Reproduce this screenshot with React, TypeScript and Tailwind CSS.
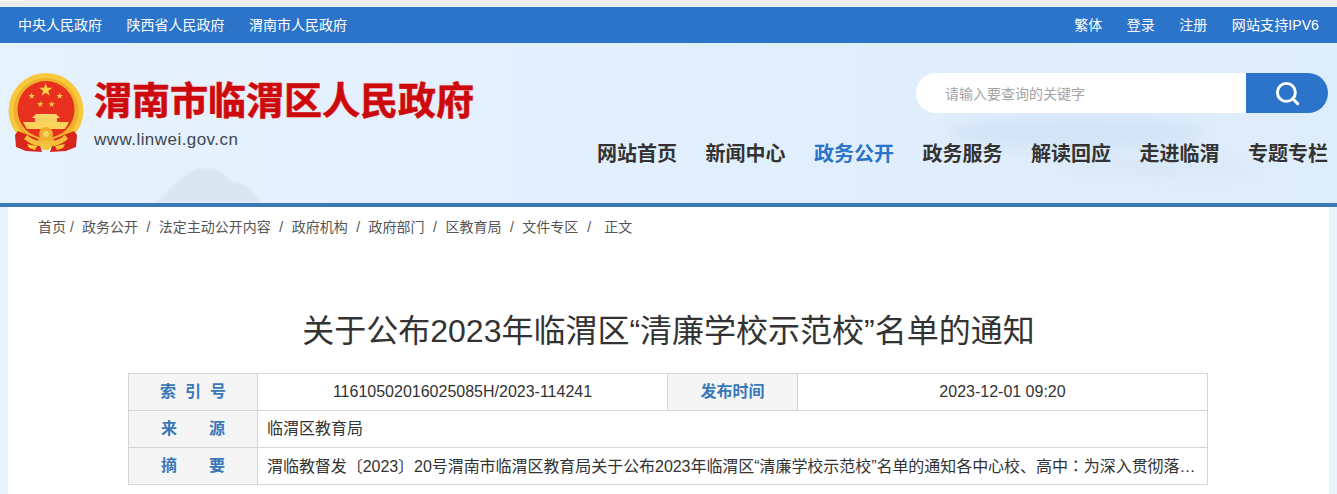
import { Search } from "lucide-react"

const font = "font-['Liberation_Sans','Noto_Sans_CJK_SC',sans-serif]"

const nav = ["网站首页", "新闻中心", "政务公开", "政务服务", "解读回应", "走进临渭", "专题专栏"]
const crumbs = ["政务公开", "法定主动公开内容", "政府机构", "政府部门", "区教育局"]

const star = (cx: number, cy: number, r: number) => {
  const pts: string[] = []
  for (let i = 0; i < 10; i++) {
    const a = (Math.PI / 5) * i - Math.PI / 2
    const d = i % 2 === 0 ? r : r * 0.38
    pts.push(`${(cx + d * Math.cos(a)).toFixed(2)},${(cy + d * Math.sin(a)).toFixed(2)}`)
  }
  return pts.join(" ")
}

const Emblem = () => (
  <svg width="76" height="80" viewBox="0 0 76 80" className="shrink-0">
    <circle cx="38" cy="37.5" r="37.5" fill="#f8c83f" />
    <circle cx="38" cy="37.5" r="32.5" fill="#efb02c" />
    <circle cx="38" cy="36.5" r="28.5" fill="#e8301f" />
    <polygon points={star(37.7, 17, 7)} fill="#fbd24a" />
    <polygon points={star(23.7, 23, 3.4)} fill="#fbd24a" />
    <polygon points={star(51.7, 23, 3.4)} fill="#fbd24a" />
    <polygon points={star(32.3, 31.3, 3.4)} fill="#fbd24a" />
    <polygon points={star(43.7, 31.3, 3.4)} fill="#fbd24a" />
    {/* gate */}
    <path d="M28 41 L48 41 L52 45 L24 45 Z" fill="#f8d467" />
    <path d="M27 45 H49 V49 H27 Z" fill="#f6cf62" />
    <path d="M15 49 H61 L57 56 H19 Z" fill="#f9d35a" />
    {/* ribbons */}
    <path d="M10 58 L7 62 L8 74 L18 78 L34 79 L30 66 Z" fill="#d8261c" />
    <path d="M66 58 L69 62 L68 74 L58 78 L42 79 L46 66 Z" fill="#d8261c" />
    <path d="M19 62 Q28 70 38 67 Q48 70 57 62 L60 66 Q48 76 38 72 Q28 76 16 66 Z" fill="#f4bd3a" />
    <circle cx="38" cy="61" r="7" fill="#eeb02e" />
    <circle cx="38" cy="61" r="3" fill="#f8d467" />
    <path d="M33 71 H43 L41 77 H35 Z" fill="#f7c53c" />
    <path d="M19 71 L29 73 L27 77 L21 75 Z M57 71 L47 73 L49 77 L55 75 Z" fill="#f7c53c" />
  </svg>
)

export default function App() {
  return (
    <div className={`h-[494px] overflow-hidden bg-[#e9f3fe] ${font}`}>
      <div className="h-[7px] bg-[#ececec]">
        <div className="h-px w-[25px] bg-white" />
      </div>

      {/* top links */}
      <div className="flex h-9 items-center justify-between bg-[#2b74c9] pl-[18px] pr-[18px] text-sm text-white">
        <div className="flex gap-[24.5px]">
          <a>中央人民政府</a>
          <a>陕西省人民政府</a>
          <a>渭南市人民政府</a>
        </div>
        <div className="flex gap-[24.5px]">
          <a>繁体</a>
          <a>登录</a>
          <a>注册</a>
          <a className="tracking-[0.1px]">网站支持IPV6</a>
        </div>
      </div>

      {/* header */}
      <div className="relative flex h-[164px] justify-between overflow-hidden border-b-4 border-[#3a78b8] bg-gradient-to-r from-[#e6f2fe] via-[#e2effd] to-[#deedfc] pl-2 pr-[9px] pt-[30px]">
        <svg className="absolute bottom-0 left-[150px] blur-[1px]" width="120" height="40" viewBox="0 0 120 40">
          <path d="M5 40 C14 34 24 20 34 13 C42 5 58 3 68 8 C76 12 78 18 84 20 C92 18 98 24 104 30 L110 40 Z" fill="#d9e7f3" />
        </svg>
        <svg className="absolute right-[60px] top-[60px] blur-[8px]" width="420" height="90" viewBox="0 0 420 90">
          <ellipse cx="220" cy="30" rx="130" ry="16" fill="#d2e3f5" />
          <ellipse cx="300" cy="65" rx="100" ry="10" fill="#d8e7f7" />
        </svg>
        <div className="relative flex">
          <Emblem />
          <div className="ml-[10px]">
            <h1 className="mt-[2px] text-[38px] font-bold leading-[52px] text-[#cc0a0e] [-webkit-text-stroke:0.6px_#cc0a0e] [text-shadow:0_0_3px_#ffd6d6]">渭南市临渭区人民政府</h1>
            <p className="mt-[1px] text-[17px] leading-6 tracking-[0.45px] text-[#3d4650]">www.linwei.gov.cn</p>
          </div>
        </div>
        <div className="relative flex flex-col items-end">
          <div className="flex h-10 w-[412px] overflow-hidden rounded-full bg-white">
            <div className="flex flex-1 items-center pl-[29px] pt-[2px] text-sm text-[#a5a5a5]">请输入要查询的关键字</div>
            <button className="flex w-[82px] items-center justify-center bg-[#2b74c9] text-white">
              <Search size={27} strokeWidth={2.6} />
            </button>
          </div>
          <nav className="mt-[26px] flex gap-[28.5px] text-xl font-bold leading-[30px] text-[#333333]">
            {nav.map((n) => (
              <a key={n} className={n === "政务公开" ? "text-[#2b74c9]" : ""}>
                {n}
              </a>
            ))}
          </nav>
        </div>
      </div>

      {/* article */}
      <div className="mx-2 h-[287px] bg-white">
        <div className="flex pl-[30px] pt-3 text-sm leading-4 text-[#555555]">
          <span>首页</span>
          <span className="ml-[4px] mr-[8px]">/</span>
          {crumbs.map((c) => (
            <span key={c} className="flex">
              <span>{c}</span>
              <span className="mx-[8.5px]">/</span>
            </span>
          ))}
          <span>文件专区</span>
          <span className="ml-[9px] mr-[13px]">/</span>
          <span>正文</span>
        </div>

        <h2 className="mt-[71px] text-center text-[32px] leading-[50px] text-[#333333]">关于公布2023年临渭区“清廉学校示范校”名单的通知</h2>

        <table className="ml-[120px] mt-[17px] w-[1080px] table-fixed border-collapse text-base text-[#333333]">
          <colgroup>
            <col className="w-[129px]" />
            <col className="w-[410px]" />
            <col className="w-[130px]" />
            <col />
          </colgroup>
          <tbody>
            <tr className="h-[37px]">
              <th className="border border-[#d5d5d5] bg-[#f5f5f5] pl-[9px] tracking-[9px] text-[#3a78b8]">索引号</th>
              <td className="border border-[#d5d5d5] text-center">11610502016025085H/2023-114241</td>
              <th className="border border-[#d5d5d5] bg-[#f5f5f5] text-[#3a78b8]">发布时间</th>
              <td className="border border-[#d5d5d5] text-center">2023-12-01 09:20</td>
            </tr>
            <tr className="h-[37px]">
              <th className="border border-[#d5d5d5] bg-[#f5f5f5] text-[#3a78b8]">来　　源</th>
              <td colSpan={3} className="border border-[#d5d5d5] px-[9px]">临渭区教育局</td>
            </tr>
            <tr className="h-[37px]">
              <th className="border border-[#d5d5d5] bg-[#f5f5f5] text-[#3a78b8]">摘　　要</th>
              <td colSpan={3} className="truncate border border-[#d5d5d5] px-[9px] tracking-[-0.05px]">
                渭临教督发〔2023〕20号渭南市临渭区教育局关于公布2023年临渭区“清廉学校示范校”名单的通知各中心校、高中<span className="font-['Noto_Sans_CJK_TC']">：</span>为深入贯彻落实党的二十大精神
              </td>
            </tr>
          </tbody>
        </table>
      </div>
    </div>
  )
}
